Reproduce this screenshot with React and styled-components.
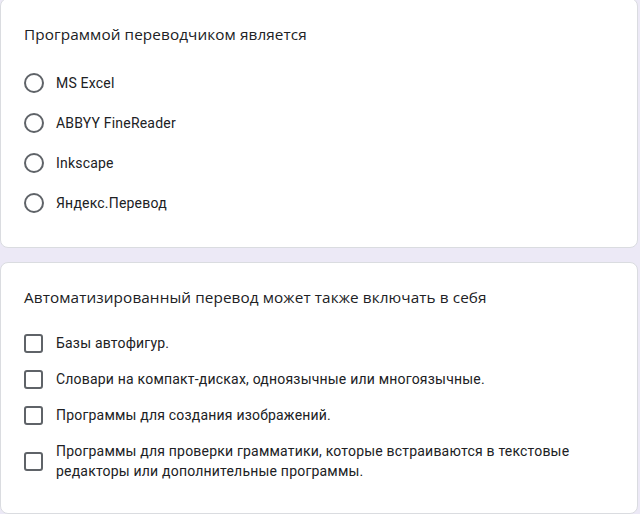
import React from 'react'
import styled, { createGlobalStyle } from 'styled-components'

const GlobalStyle = createGlobalStyle`
  html, body {
    margin: 0;
    padding: 0;
    background: #ece9f6;
    overflow: hidden;
  }
`

const Page = styled.div`
  display: flex;
  flex-direction: column;
  gap: 14px;
  margin-top: -2px;
  padding-right: 2px;
  font-family: Roboto, "Liberation Sans", sans-serif;
  color: #202124;
`

const Card = styled.div`
  background: #fff;
  border: 1px solid #dadce0;
  border-radius: 8px;
  padding: ${p => p.$top}px 24px ${p => p.$bottom}px 23px;
`

const Title = styled.div`
  font-family: "Open Sans", Roboto, sans-serif;
  font-size: 15.3px;
  line-height: 24px;
  letter-spacing: 0.1px;
  color: #202124;
  margin-bottom: ${p => p.$gap}px;
`

const List = styled.div`
  display: flex;
  flex-direction: column;
`

const Row = styled.label`
  display: flex;
  align-items: center;
  gap: ${p => p.$gap}px;
  min-height: ${p => p.$h || 0}px;
  padding: ${p => p.$pad || 0}px 0;
  font-size: 14px;
  line-height: 20px;
  letter-spacing: 0.2px;
`

const Radio = styled.span`
  flex: none;
  width: 16px;
  height: 16px;
  border: 2px solid #5f6368;
  border-radius: 50%;
`

const Check = styled.span`
  flex: none;
  width: 15px;
  height: 15px;
  border: 2px solid #5f6368;
  border-radius: 3px;
`

const radios = ['MS Excel', 'ABBYY FineReader', 'Inkscape', 'Яндекс.Перевод']

const checks = [
  'Базы автофигур.',
  'Словари на компакт-дисках, одноязычные или многоязычные.',
  'Программы для создания изображений.',
  'Программы для проверки грамматики, которые встраиваются в текстовые редакторы или дополнительные программы.',
]

export default function App() {
  return (
    <>
      <GlobalStyle />
      <Page>
        <Card $top={23} $bottom={24}>
          <Title $gap={17}>Программой переводчиком является</Title>
          <List>
            {radios.map(r => (
              <Row key={r} $h={40} $gap={12}>
                <Radio />
                {r}
              </Row>
            ))}
          </List>
        </Card>
        <Card $top={22} $bottom={24}>
          <Title $gap={16}>Автоматизированный перевод может также включать в себя</Title>
          <List>
            {checks.map(c => (
              <Row key={c} $gap={13} $pad={8}>
                <Check />
                <span>{c}</span>
              </Row>
            ))}
          </List>
        </Card>
      </Page>
    </>
  )
}
